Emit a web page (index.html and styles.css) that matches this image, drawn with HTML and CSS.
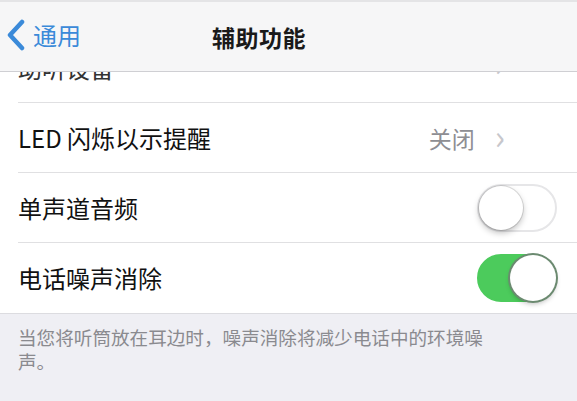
FILE: index.html
```html
<!DOCTYPE html>
<html lang="zh-CN">
<head>
    <meta charset="UTF-8">
    <meta name="viewport" content="width=device-width, initial-scale=1.0">
    <title>辅助功能</title>
    <link rel="stylesheet" href="styles.css">
</head>
<body>
    <div class="screen">
        <div class="nav-bar">
            <div class="nav-back">
                <svg class="back-icon" width="20" height="32" viewBox="0 0 20 32">
                    <path d="M16 3 L4 16 L16 29" fill="none" stroke="#3b8ad9" stroke-width="4.5" stroke-linecap="round" stroke-linejoin="round"/>
                </svg>
                <span class="back-text">通用</span>
            </div>
            <div class="nav-title">辅助功能</div>
        </div>

        <div class="list">
            <div class="row row-cut">
                <span class="row-label">助听设备</span>
                <span class="chevron">&#8250;</span>
            </div>
            <div class="row">
                <span class="row-label">LED 闪烁以示提醒</span>
                <span class="row-value">关闭</span>
                <span class="chevron">&#8250;</span>
            </div>
            <div class="row">
                <span class="row-label">单声道音频</span>
                <span class="switch"><span class="knob"></span></span>
            </div>
            <div class="row row-last">
                <span class="row-label">电话噪声消除</span>
                <span class="switch on"><span class="knob"></span></span>
            </div>
        </div>

        <div class="footer">
            <p class="footer-text">当您将听筒放在耳边时，噪声消除将减少电话中的环境噪声。</p>
        </div>
    </div>
</body>
</html>
```

FILE: styles.css
```css
* {
    margin: 0;
    padding: 0;
    box-sizing: border-box;
    font-family: "Noto Sans CJK SC", "Noto Sans", sans-serif;
}

body {
    width: 577px;
    height: 401px;
    overflow: hidden;
    background-color: #efeff4;
    color: #111;
}

.screen {
    display: flex;
    flex-direction: column;
    height: 401px;
}

.nav-bar {
    position: relative;
    height: 72px;
    background-color: #f6f6f7;
    border-top: 2px solid #e4e4e6;
    border-bottom: 1px solid #cfcfd3;
    display: flex;
    align-items: center;
    padding-left: 6px;
}

.nav-back {
    display: flex;
    align-items: center;
    gap: 7px;
    margin-top: -3px;
}

.back-text {
    font-size: 24px;
    color: #3b8ad9;
    line-height: 1;
}

.nav-title {
    position: absolute;
    left: 212px;
    top: 20px;
    font-size: 23px;
    font-weight: 700;
    color: #1a1a1a;
    letter-spacing: 0.5px;
    line-height: 30px;
}

.list {
    background-color: #fff;
}

.row {
    height: 70px;
    display: flex;
    align-items: center;
    margin-left: 18px;
    padding-right: 20px;
    border-bottom: 1px solid #e0e0e2;
}

.row-last {
    border-bottom: none;
    margin-left: 0;
    padding-left: 18px;
}

.row-cut {
    height: 31px;
    overflow: hidden;
    align-items: flex-start;
}

.row-cut .row-label {
    margin-top: -19px;
    color: #333;
}

.row-cut .chevron {
    margin-top: -24px;
}

.row-label {
    flex: 1;
    font-size: 24px;
    line-height: 30px;
}

.row-value {
    font-size: 23px;
    color: #8e8e93;
    margin-right: 20px;
}

.chevron {
    font-size: 34px;
    color: #c7c7cc;
    line-height: 30px;
    margin-top: -4px;
    margin-right: 52px;
}

.switch {
    position: relative;
    width: 80px;
    height: 48px;
    border-radius: 24px;
    border: 2px solid #e6e6e8;
    background-color: #fff;
}

.switch .knob {
    position: absolute;
    top: 0;
    left: 0;
    width: 44px;
    height: 44px;
    border-radius: 50%;
    background-color: #fff;
    box-shadow: 0 3px 6px rgba(0, 0, 0, 0.25), 0 0 0 1px rgba(0, 0, 0, 0.12);
}

.switch.on {
    background-color: #4ccb5c;
    border-color: #4ccb5c;
}

.switch.on .knob {
    left: auto;
    right: -1px;
    top: -1px;
    width: 46px;
    height: 46px;
    box-shadow: 0 0 0 2px #6b8a70, 0 3px 5px rgba(0, 0, 0, 0.25);
}

.footer {
    flex: 1;
    background-color: #efeff4;
    border-top: 1px solid #dcdce0;
    padding: 11px 0 0 18px;
}

.footer-text {
    width: 472px;
    font-size: 18.6px;
    line-height: 24px;
    color: #8a8a8f;
}
```
